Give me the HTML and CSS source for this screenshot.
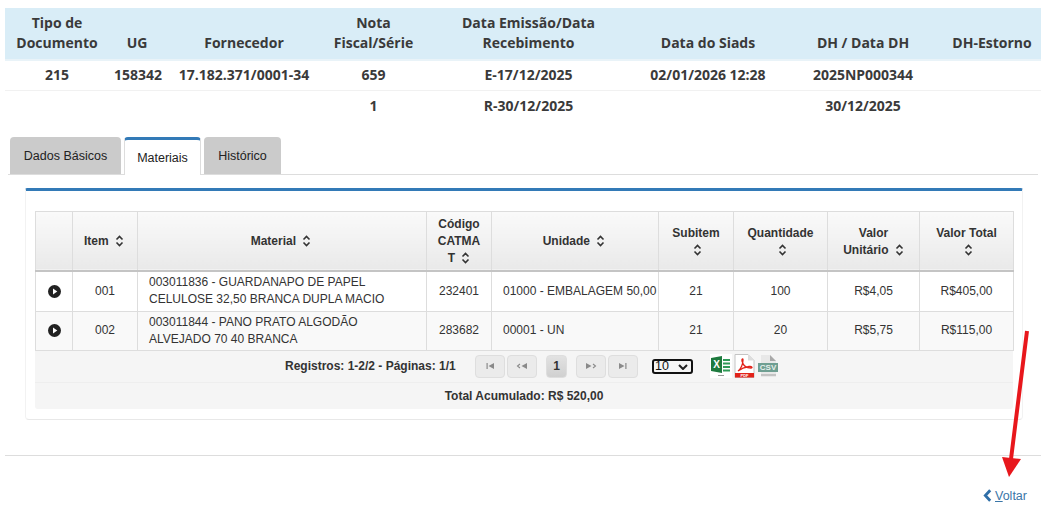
FILE: index.html
```html
<!DOCTYPE html>
<html lang="pt-BR">
<head>
<meta charset="utf-8">
<title>Materiais</title>
<link rel="stylesheet" href="styles.css">
</head>
<body>
<table class="summary">
  <colgroup><col class="s1"><col class="s2"><col class="s3"><col class="s4"><col class="s5"><col class="s6"><col class="s7"><col class="s8"></colgroup>
  <thead>
    <tr><th>Tipo de Documento</th><th>UG</th><th>Fornecedor</th><th>Nota Fiscal/Série</th><th>Data Emissão/Data Recebimento</th><th>Data do Siads</th><th>DH / Data DH</th><th>DH-Estorno</th></tr>
  </thead>
  <tbody>
    <tr class="first"><td>215</td><td>158342</td><td>17.182.371/0001-34</td><td>659</td><td>E-17/12/2025</td><td>02/01/2026 12:28</td><td>2025NP000344</td><td></td></tr>
    <tr><td></td><td></td><td></td><td>1</td><td>R-30/12/2025</td><td></td><td>30/12/2025</td><td></td></tr>
  </tbody>
</table>

<nav class="tabs">
  <a class="tab tab-a">Dados Básicos</a>
  <a class="tab tab-b active">Materiais</a>
  <a class="tab tab-c">Histórico</a>
</nav>

<section class="panel">
  <div class="grid-wrap">
    <table class="grid">
      <colgroup><col class="g0"><col class="g1"><col class="g2"><col class="g3"><col class="g4"><col class="g5"><col class="g6"><col class="g7"><col class="g8"></colgroup>
      <thead>
        <tr>
          <th></th>
          <th class="nudge">Item <svg class="sort" viewBox="0 0 8 12"><path d="M1 4.5 4 1.5 7 4.5M1 7.5 4 10.5 7 7.5"/></svg></th>
          <th class="nudge">Material <svg class="sort" viewBox="0 0 8 12"><path d="M1 4.5 4 1.5 7 4.5M1 7.5 4 10.5 7 7.5"/></svg></th>
          <th class="tight">Código CATMA T <svg class="sort" viewBox="0 0 8 12"><path d="M1 4.5 4 1.5 7 4.5M1 7.5 4 10.5 7 7.5"/></svg></th>
          <th class="nudge">Unidade <svg class="sort" viewBox="0 0 8 12"><path d="M1 4.5 4 1.5 7 4.5M1 7.5 4 10.5 7 7.5"/></svg></th>
          <th>Subitem <svg class="sort" viewBox="0 0 8 12"><path d="M1 4.5 4 1.5 7 4.5M1 7.5 4 10.5 7 7.5"/></svg></th>
          <th>Quantidade <svg class="sort" viewBox="0 0 8 12"><path d="M1 4.5 4 1.5 7 4.5M1 7.5 4 10.5 7 7.5"/></svg></th>
          <th>Valor Unitário <svg class="sort" viewBox="0 0 8 12"><path d="M1 4.5 4 1.5 7 4.5M1 7.5 4 10.5 7 7.5"/></svg></th>
          <th>Valor Total <svg class="sort" viewBox="0 0 8 12"><path d="M1 4.5 4 1.5 7 4.5M1 7.5 4 10.5 7 7.5"/></svg></th>
        </tr>
      </thead>
      <tbody>
        <tr class="r1">
          <td><svg class="play" viewBox="0 0 12 12"><circle cx="6" cy="6" r="6"/><path d="M4.6 3.2 8.6 6 4.6 8.8Z"/></svg></td>
          <td>001</td><td class="left wrap">003011836 - GUARDANAPO DE PAPEL CELULOSE 32,50 BRANCA DUPLA MACIO</td><td>232401</td><td class="left">01000 - EMBALAGEM 50,00</td><td>21</td><td>100</td><td>R$4,05</td><td>R$405,00</td>
        </tr>
        <tr class="r2">
          <td><svg class="play" viewBox="0 0 12 12"><circle cx="6" cy="6" r="6"/><path d="M4.6 3.2 8.6 6 4.6 8.8Z"/></svg></td>
          <td>002</td><td class="left wrap">003011844 - PANO PRATO ALGODÃO ALVEJADO 70 40 BRANCA</td><td>283682</td><td class="left">00001 - UN</td><td>21</td><td>20</td><td>R$5,75</td><td>R$115,00</td>
        </tr>
      </tbody>
    </table>
    <div class="pager">
      <span class="pager-info">Registros: 1-2/2 - Páginas: 1/1</span>
      <span class="btns">
        <button class="pg"><svg viewBox="0 0 12 8"><path d="M2.500 1h1.200v6H2.500zM10 1v6L4.500 4z"/></svg></button>
        <button class="pg"><svg viewBox="0 0 12 8"><path class="line" d="M4 2 1.500 4 4 6"/><path d="M11 1v6L5.500 4z"/></svg></button>
      </span>
      <button class="pg cur">1</button>
      <span class="btns">
        <button class="pg"><svg viewBox="0 0 12 8"><path d="M1 1v6l5.500-3z"/><path class="line" d="M8 2l2.500 2L8 6"/></svg></button>
        <button class="pg"><svg viewBox="0 0 12 8"><path d="M2 1v6l5.500-3zM8.300 1h1.200v6H8.300z"/></svg></button>
      </span>
      <span class="size-wrap">
        <select class="size"><option>10</option></select>
        <svg class="size-arrow" viewBox="0 0 10 6"><path d="M1 1 5 5 9 1"/></svg>
      </span>
      <span class="exports">
        <svg class="xls" viewBox="0 0 22 24"><rect width="22" height="24" fill="#fff"/><path fill="#1e7a3e" d="M1 4 12 2v17L1 17z"/><text x="3.200" y="14" class="x-mark">X</text><path fill="#2f9a57" d="M13 5h7v2h-7zM13 8.500h7v2h-7zM13 12h7v2h-7zM13 15.500h7v2h-7z"/><path fill="#999" d="M8 21h6v1H8z"/></svg>
        <svg class="pdf" viewBox="0 0 21 24"><path fill="#fff" stroke="#c4c4c4" d="M1 .5h13l6 6v17H1z"/><path fill="#ddd" d="M14 .5v6h6z"/><path fill="#e2231a" d="M1 19h19v4.500H1z"/><text x="10.500" y="23" class="pdf-mark">PDF</text><path fill="none" stroke="#e2231a" stroke-width="1.300" d="M4 17c3-2 5-7 5-11 0-2-1.500-1-1 1 1 4 4 7 9 7 2 0 1-2-2-1.500-3 .5-7 1.500-11 4.500z"/></svg>
        <svg class="csv" viewBox="0 0 22 24"><path fill="#e8e8e8" d="M4 1h9l6 6v16H4z"/><path fill="#a9a9a9" d="M13 1v6h6z"/><path fill="#6f9f92" d="M1 9h20v9H1z"/><text x="11" y="16.300" class="csv-mark">CSV</text><path fill="#c4c4c4" d="M4 20h15v2H4z"/></svg>
      </span>
    </div>
    <div class="total">Total Acumulado: R$ 520,00</div>
  </div>
</section>

<footer class="actions">
  <a class="back"><svg class="chev" viewBox="0 0 8 12"><path d="M6.500 1.200 2 6l4.500 4.800"/></svg><span><u>V</u>oltar</span></a>
</footer>

<svg class="arrow" viewBox="0 0 33 152"><path d="M29 3 13 131" stroke="#e8171c" stroke-width="4" fill="none"/><path d="M4 129 23 131 11 149z" fill="#e8171c"/></svg>
</body>
</html>
```
FILE: styles.css
```css
* { box-sizing: border-box; }
html, body { margin: 0; padding: 0; }
body {
  width: 1049px;
  height: 510px;
  overflow: hidden;
  position: relative;
  background: #fff;
  font-family: "Liberation Sans", Arial, sans-serif;
  color: #333;
}
.summary {
  border-collapse: collapse;
  table-layout: fixed;
  width: 1036px;
  margin: 8px 0 0 5px;
  font-family: "Open Sans", sans-serif;
  font-size: 14px;
  font-weight: 700;
  color: #3a3a3a;
  line-height: 20px;
}
.s1 { width: 104px; } .s2 { width: 56px; } .s3 { width: 158px; } .s4 { width: 101px; }
.s5 { width: 209px; } .s6 { width: 150px; } .s7 { width: 160px; } .s8 { width: 98px; }
.summary th {
  background: #d9edf7;
  border-bottom: 2px solid #e9f3f8;
  padding: 5px 5px 6px;
  height: 52px;
  vertical-align: bottom;
  font-weight: 700;
}
.summary td { text-align: center; padding: 5px; height: 31px; }
.summary .first td { height: 30px; padding: 4px 5px 5px; border-bottom: 1px solid #f1f1f1; }
.tabs {
  display: flex;
  margin: 15px 11px 0 8px;
  padding-left: 2px;
  height: 38px;
  border-bottom: 1px solid #ddd;
  font-size: 12.5px;
}
.tab {
  display: block;
  height: 37px;
  border-radius: 4px 4px 0 0;
  background: #cbcbcb;
  color: #222;
  padding-top: 12px;
  line-height: 14px;
  text-align: center;
}
.tab-a { width: 111px; }
.tab-b { width: 77px; margin-left: 3px; }
.tab-c { width: 77px; margin-left: 3px; }
.tab.active {
  background: #fff;
  height: 38px;
  border-top: 3px solid #337ab7;
  border-left: 1px solid #ddd;
  border-right: 1px solid #ddd;
  padding-top: 11px;
}
.panel {
  margin: 13px 0 0 25px;
  width: 998px;
  height: 232px;
  border-top: 3px solid #337ab7;
  border-left: 1px solid #f2f2f2;
  border-right: 1px solid #f2f2f2;
  border-bottom: 1px solid #e8e8e8;
  border-radius: 2px 2px 4px 4px;
  padding: 20px 10px 0 9px;
}
.grid-wrap {
  width: 978px;
  height: 198px;
  background: #f5f5f5;
  border-radius: 0 0 3px 3px;
}
.grid {
  border-collapse: collapse;
  table-layout: fixed;
  width: 978px;
  font-size: 12px;
  color: #333;
  line-height: 17px;
}
.g0 { width: 37px; } .g1 { width: 65px; } .g2 { width: 289px; } .g3 { width: 65px; }
.g4 { width: 167px; } .g5 { width: 75px; } .g6 { width: 94px; } .g7 { width: 92px; } .g8 { width: 94px; }
.grid th {
  height: 60px;
  padding: 2px 10px 0;
  border: 1px solid #ddd;
  border-bottom: 2px solid #c4c4c4;
  background: linear-gradient(#fafafa, #e9e9e9);
  font-weight: 700;
  text-align: center;
}
.grid th.tight { padding: 2px 6px 0; }
.grid th.nudge { padding-right: 12px; }
.grid td {
  border: 1px solid #ddd;
  padding: 0 0;
  text-align: center;
}
.grid td.left { text-align: left; padding-left: 11px; }
.grid td.wrap { padding-right: 8px; }
.r1 td { height: 40px; background: #fff; }
.r2 td { height: 39px; background: #f9f9f9; }
.sort { width: 9px; height: 12px; vertical-align: -2px; margin-left: 3px; }
.sort path { fill: none; stroke: #333; stroke-width: 1.600; }
.play { display: block; width: 13px; height: 13px; margin: 0 auto; }
.play circle { fill: #222; }
.play path { fill: #fff; }
.pager {
  display: flex;
  align-items: center;
  height: 32px;
  border-bottom: 1px solid #eee;
  padding-left: 250px;
  font-weight: 700;
  font-size: 12px;
  color: #333;
}
.pager-info { width: 190px; }
.btns { display: flex; gap: 2px; }
.pg {
  display: flex;
  align-items: center;
  justify-content: center;
  width: 30px;
  height: 23px;
  padding: 0;
  background: #ebebeb;
  border: 1px solid #dedede;
  border-radius: 4px;
  color: #333;
  font: 700 12px "Liberation Sans", sans-serif;
}
.pg svg { width: 12px; height: 8px; fill: #8a8a8a; }
.pg svg .line { fill: none; stroke: #8a8a8a; stroke-width: 1.100; }
.pg.cur { width: 21px; background: linear-gradient(#e2e2e2, #d0d0d0); margin: 0 9px; }
.size-wrap { position: relative; display: flex; margin-left: 14px; }
.size {
  appearance: none;
  width: 41px;
  height: 15px;
  padding: 0 0 0 1px;
  background: #f5f5f5;
  border: 2px solid #111;
  border-radius: 3px;
  font: 12.5px/11px "Liberation Sans", sans-serif;
  color: #111;
}
.size-arrow { position: absolute; right: 5px; top: 5px; width: 10px; height: 6px; }
.size-arrow path { fill: none; stroke: #222; stroke-width: 2; }
.exports { display: flex; align-items: center; gap: 2px; margin-left: 17px; }
.xls { width: 22px; height: 24px; }
.pdf { width: 21px; height: 24px; }
.csv { width: 22px; height: 24px; }
.x-mark { fill: #fff; font: 700 10px "Liberation Sans", sans-serif; }
.pdf-mark { fill: #fff; font: 700 4px "Liberation Sans", sans-serif; text-anchor: middle; }
.csv-mark { fill: #e6efec; font: 700 8px "Liberation Sans", sans-serif; text-anchor: middle; }
.total {
  height: 25px;
  line-height: 26px;
  text-align: center;
  font-weight: 700;
  font-size: 12px;
}
.actions {
  margin: 35px 8px 0 5px;
  border-top: 1px solid #ddd;
  display: flex;
  justify-content: flex-end;
  padding: 32px 14px 0 0;
  font-size: 12.5px;
  line-height: 16px;
}
.back { display: flex; align-items: center; gap: 3px; color: #3a76a8; }
.chev { width: 9px; height: 13px; }
.chev path { fill: none; stroke: #2f6fa8; stroke-width: 2.600; }
.arrow { position: absolute; left: 998px; top: 328px; width: 33px; height: 152px; }
```
